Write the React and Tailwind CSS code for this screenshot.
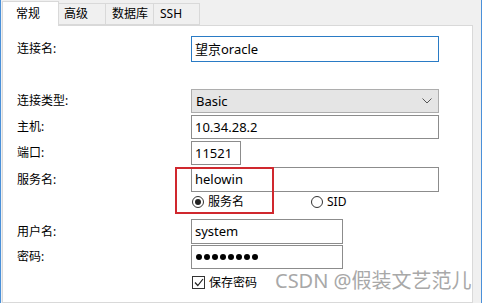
const font = { fontFamily: '"Noto Sans", "Noto Sans CJK SC", sans-serif' };

function Field({ value, width = 'w-[248px]', height = 'h-[24px]', focus = false, children }) {
  return (
    <div
      className={`${width} ${height} flex items-center border bg-white px-[3px] text-[13px] leading-none text-black ${
        focus ? 'border-[#2a7bc5]' : 'border-[#8c8c8c]'
      }`}
    >
      {children ?? value}
    </div>
  );
}

function Row({ label, className = '', children }) {
  return (
    <div className={`flex items-center ${className}`}>
      <div className="w-[174px] shrink-0 text-[12px] leading-none text-black">{label}</div>
      {children}
    </div>
  );
}

function Radio({ checked, label }) {
  return (
    <div className="flex items-center gap-[4px] text-[12px] leading-none text-black">
      <span className="flex h-[12px] w-[12px] items-center justify-center rounded-full border border-[#333]">
        {checked && <span className="h-[6px] w-[6px] rounded-full bg-[#222]" />}
      </span>
      {label}
    </div>
  );
}

export default function App() {
  return (
    <div
      style={font}
      className="relative flex h-[303px] w-[482px] flex-col overflow-hidden border-x border-[#4a90d9] bg-[#f0f0f0]"
    >
      {/* tabs */}
      <div className="flex h-[25px] items-end pl-[1px]">
        <div className="relative z-10 -mb-px flex h-[25px] w-[57px] items-start border border-b-0 border-[#d9d9d9] bg-white pl-[13px] pt-[6px] text-[12px] leading-none">
          常规
        </div>
        <div className="flex h-[22px] w-[47px] items-start border border-l-0 border-[#d9d9d9] pl-[5px] pt-[4px] text-[12px] leading-none">
          高级
        </div>
        <div className="flex h-[22px] w-[48px] items-start border border-l-0 border-[#d9d9d9] pl-[6px] pt-[4px] text-[12px] leading-none">
          数据库
        </div>
        <div className="flex h-[22px] w-[46px] items-start border border-l-0 border-[#d9d9d9] pl-[6px] pt-[4px] text-[12px] leading-none">
          SSH
        </div>
      </div>

      {/* panel */}
      <div className="relative ml-[1px] mr-[8px] flex-1 border border-[#d9d9d9] bg-white pl-[14px] pt-[10px]">
        <Row label="连接名:">
          <Field value="望京oracle" height="h-[26px]" focus />
        </Row>

        <Row label="连接类型:" className="mt-[27px]">
          <div className="flex h-[24px] w-[248px] items-center justify-between border border-[#adadad] bg-[#e5e5e5] pl-[4px] pr-[6px] text-[13px] leading-none">
            Basic
            <svg width="10" height="6" viewBox="0 0 10 6" fill="none" stroke="#555" strokeWidth="1">
              <path d="M0.5 0.5 L5 5 L9.5 0.5" />
            </svg>
          </div>
        </Row>

        <Row label="主机:" className="mt-[2px]">
          <Field value="10.34.28.2" />
        </Row>

        <Row label="端口:" className="mt-[2px]">
          <Field value="11521" width="w-[50px]" />
        </Row>

        <Row label="服务名:" className="mt-[2px]">
          <Field value="helowin" height="h-[25px]" />
        </Row>

        <div className="flex h-[22px] items-start pl-[175px] pt-[4px]">
          <div className="w-[119px]">
            <Radio checked label="服务名" />
          </div>
          <Radio label="SID" />
        </div>

        <Row label="用户名:" className="mt-[5px]">
          <Field value="system" width="w-[152px]" height="h-[25px]" />
        </Row>

        <Row label="密码:" className="mt-[1px]">
          <Field width="w-[152px]">
            <div className="flex gap-[2px] pl-[1px]">
              {[0, 1, 2, 3, 4, 5, 6, 7].map((i) => (
                <span key={i} className="h-[6px] w-[6px] rounded-full bg-black" />
              ))}
            </div>
          </Field>
        </Row>

        <div className="mt-[7px] flex items-center gap-[4px] pl-[175px] text-[12px] leading-none">
          <span className="flex h-[13px] w-[13px] items-center justify-center border border-[#333] bg-white">
            <svg width="10" height="9" viewBox="0 0 10 9" fill="none" stroke="#222" strokeWidth="1.2">
              <path d="M1 4.5 L3.8 7.5 L9 1" />
            </svg>
          </span>
          保存密码
        </div>

        {/* red annotation box */}
        <div className="absolute left-[172px] top-[141px] h-[47px] w-[99px] border-2 border-[#d0282e]" />
      </div>

      {/* watermark */}
      <div className="absolute left-[274px] top-[271px] text-[20px] leading-none text-[#a8a8a8]">
        CSDN @假装文艺范儿
      </div>
    </div>
  );
}
